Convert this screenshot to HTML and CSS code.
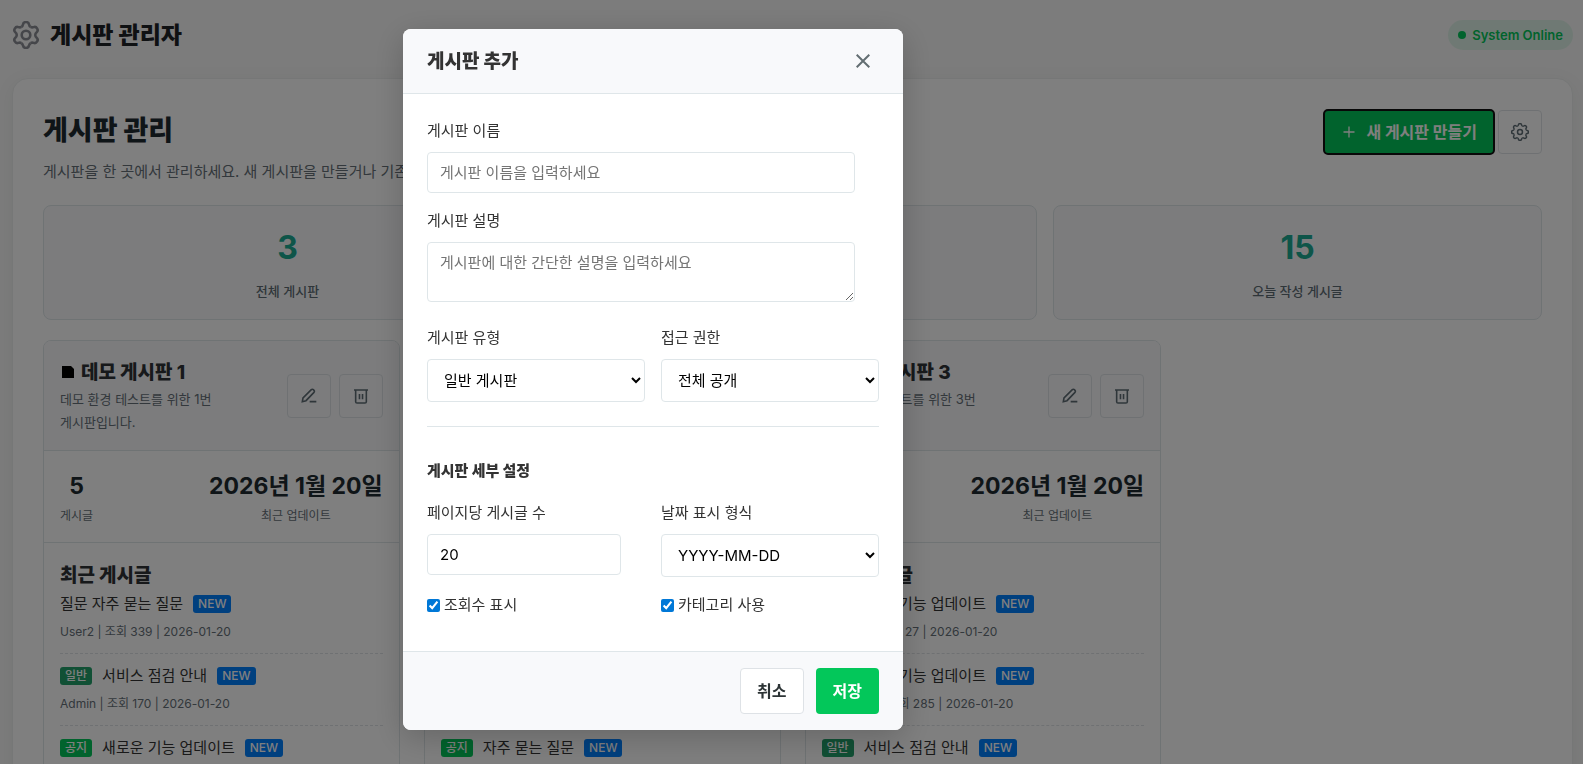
FILE: index.html
```html
<!DOCTYPE html>
<html lang="ko">
<head>
<meta charset="utf-8">
<meta name="viewport" content="width=device-width, initial-scale=1">
<title>게시판 관리자</title>
<link rel="stylesheet" href="styles.css">
</head>
<body>
<svg class="sprite" aria-hidden="true">
  <symbol id="edit" viewBox="0 0 24 24"><path d="M2 20.500l1-5.500L15.500 2.500a2.100 2.100 0 0 1 3 0l1 1a2.100 2.100 0 0 1 0 3L7.500 19zM13 20.500h10" /></symbol>
  <symbol id="trash" viewBox="0 0 24 24"><path d="M1.500 3h21M4 3v17.500a2 2 0 0 0 2 2h12a2 2 0 0 0 2-2V3M9.700 9v8M14.300 9v8" /></symbol>
  <path id="lobe6" d="M-4.300-7.450Q-3-8.200-2.800-9.800Q-2.400-12 0-12Q2.400-12 2.800-9.800Q3-8.200 4.300-7.450"/>
  <path id="lobe8" d="M-3.300-7.950Q-2.400-8.300-2.100-9.600Q-1.800-11.300 0-11.300Q1.800-11.300 2.100-9.600Q2.400-8.300 3.300-7.950"/>
</svg>
<header class="topbar">
  <div class="brand">
    <svg class="brand-icon" viewBox="-13 -13 26 26" aria-hidden="true"><use href="#lobe6"/><use href="#lobe6" transform="rotate(60)"/><use href="#lobe6" transform="rotate(120)"/><use href="#lobe6" transform="rotate(180)"/><use href="#lobe6" transform="rotate(240)"/><use href="#lobe6" transform="rotate(300)"/><circle r="4"/></svg>
    <h1>게시판 관리자</h1>
  </div>
  <span class="status"><span class="dot"></span>System Online</span>
</header>
<main class="panel">
  <div class="panel-head">
    <div>
      <h2>게시판 관리</h2>
      <p class="lead">게시판을 한 곳에서 관리하세요. 새 게시판을 만들거나 기존 게시판을 수정할 수 있습니다.</p>
    </div>
    <div class="panel-actions">
      <button class="btn btn-primary is-focused" type="button"><svg class="plus" viewBox="0 0 12 12" aria-hidden="true"><path d="M6 .5v11M.5 6h11"/></svg>새 게시판 만들기</button>
      <button class="icon-btn" type="button" aria-label="설정"><svg class="gear" viewBox="-12 -12 24 24" aria-hidden="true"><use href="#lobe8"/><use href="#lobe8" transform="rotate(45)"/><use href="#lobe8" transform="rotate(90)"/><use href="#lobe8" transform="rotate(135)"/><use href="#lobe8" transform="rotate(180)"/><use href="#lobe8" transform="rotate(225)"/><use href="#lobe8" transform="rotate(270)"/><use href="#lobe8" transform="rotate(315)"/><circle r="3.300"/></svg></button>
    </div>
  </div>
  <section class="stats">
    <div class="stat"><strong>3</strong><span>전체 게시판</span></div>
    <div class="stat"><strong>15</strong><span>전체 게시글</span></div>
    <div class="stat"><strong>15</strong><span>오늘 작성 게시글</span></div>
  </section>
  <section class="boards">
    <article class="board">
      <div class="board-head">
        <div>
          <h3><svg class="doc" viewBox="0 0 12 12" aria-hidden="true"><path d="M0 0h9l3 3v9H0z"/></svg>데모 게시판 1</h3>
          <p>데모 환경 테스트를 위한 1번 게시판입니다.</p>
        </div>
        <div class="board-actions">
          <button class="icon-btn" type="button" aria-label="수정"><svg viewBox="0 0 24 24"><use href="#edit"/></svg></button>
          <button class="icon-btn" type="button" aria-label="삭제"><svg viewBox="0 0 24 24"><use href="#trash"/></svg></button>
        </div>
      </div>
      <div class="board-stats">
        <div><strong>5</strong><span>게시글</span></div>
        <div><strong>2026년 1월 20일</strong><span>최근 업데이트</span></div>
      </div>
      <div class="recent">
        <h3>최근 게시글</h3>
        <ul>
          <li><div class="post">질문 자주 묻는 질문<span class="tag new">NEW</span></div><div class="meta">User2 | 조회 339 | 2026-01-20</div></li>
          <li><div class="post"><span class="tag general">일반</span>서비스 점검 안내<span class="tag new">NEW</span></div><div class="meta">Admin | 조회 170 | 2026-01-20</div></li>
          <li><div class="post"><span class="tag notice">공지</span>새로운 기능 업데이트<span class="tag new">NEW</span></div></li>
        </ul>
      </div>
    </article>
    <article class="board">
      <div class="board-head">
        <div>
          <h3><svg class="doc" viewBox="0 0 12 12" aria-hidden="true"><path d="M0 0h9l3 3v9H0z"/></svg>데모 게시판 2</h3>
          <p>데모 환경 테스트를 위한 2번 게시판입니다.</p>
        </div>
        <div class="board-actions">
          <button class="icon-btn" type="button" aria-label="수정"><svg viewBox="0 0 24 24"><use href="#edit"/></svg></button>
          <button class="icon-btn" type="button" aria-label="삭제"><svg viewBox="0 0 24 24"><use href="#trash"/></svg></button>
        </div>
      </div>
      <div class="board-stats">
        <div><strong>5</strong><span>게시글</span></div>
        <div><strong>2026년 1월 20일</strong><span>최근 업데이트</span></div>
      </div>
      <div class="recent">
        <h3>최근 게시글</h3>
        <ul>
          <li><div class="post">질문 서비스 점검<span class="tag new">NEW</span></div><div class="meta">Admin | 조회 170 | 2026-01-20</div></li>
          <li><div class="post"><span class="tag general">일반</span>서비스 점검<span class="tag new">NEW</span></div><div class="meta">Admin | 조회 170 | 2026-01-20</div></li>
          <li><div class="post"><span class="tag notice">공지</span>자주 묻는 질문<span class="tag new">NEW</span></div></li>
        </ul>
      </div>
    </article>
    <article class="board">
      <div class="board-head">
        <div>
          <h3><svg class="doc" viewBox="0 0 12 12" aria-hidden="true"><path d="M0 0h9l3 3v9H0z"/></svg>데모 게시판 3</h3>
          <p>데모 환경 테스트를 위한 3번 게시판입니다.</p>
        </div>
        <div class="board-actions">
          <button class="icon-btn" type="button" aria-label="수정"><svg viewBox="0 0 24 24"><use href="#edit"/></svg></button>
          <button class="icon-btn" type="button" aria-label="삭제"><svg viewBox="0 0 24 24"><use href="#trash"/></svg></button>
        </div>
      </div>
      <div class="board-stats">
        <div><strong>5</strong><span>게시글</span></div>
        <div><strong>2026년 1월 20일</strong><span>최근 업데이트</span></div>
      </div>
      <div class="recent">
        <h3>최근 게시글</h3>
        <ul>
          <li><div class="post">질문 새로운 기능 업데이트<span class="tag new">NEW</span></div><div class="meta">Member | 조회 27 | 2026-01-20</div></li>
          <li><div class="post">질문 새로운 기능 업데이트<span class="tag new">NEW</span></div><div class="meta">Manager1 | 조회 285 | 2026-01-20</div></li>
          <li><div class="post"><span class="tag general">일반</span>서비스 점검 안내<span class="tag new">NEW</span></div></li>
        </ul>
      </div>
    </article>
  </section>
</main>
<div class="overlay">
  <form class="modal" role="dialog" aria-labelledby="modal-title">
    <div class="modal-head">
      <h3 id="modal-title">게시판 추가</h3>
      <button class="close" type="button" aria-label="닫기"><svg viewBox="0 0 14 14" aria-hidden="true"><path d="M.7.7l12.600 12.600M13.300.7L.7 13.300"/></svg></button>
    </div>
    <div class="modal-body">
      <div class="field full"><label for="name">게시판 이름</label><input id="name" type="text" placeholder="게시판 이름을 입력하세요"></div>
      <div class="field full"><label for="desc">게시판 설명</label><textarea id="desc" placeholder="게시판에 대한 간단한 설명을 입력하세요"></textarea></div>
      <div class="row types">
        <div class="field"><label for="type">게시판 유형</label><select id="type"><option>일반 게시판</option></select></div>
        <div class="field"><label for="access">접근 권한</label><select id="access"><option>전체 공개</option></select></div>
      </div>
      <hr>
      <h4>게시판 세부 설정</h4>
      <div class="row">
        <div class="field"><label for="count">페이지당 게시글 수</label><input class="count" id="count" type="number" value="20"></div>
        <div class="field"><label for="date">날짜 표시 형식</label><select id="date"><option>YYYY-MM-DD</option></select></div>
        <label class="check"><input type="checkbox" checked>조회수 표시</label>
        <label class="check"><input type="checkbox" checked>카테고리 사용</label>
      </div>
    </div>
    <div class="modal-foot">
      <button class="btn btn-plain" type="button">취소</button>
      <button class="btn btn-primary" type="submit">저장</button>
    </div>
  </form>
</div>
</body>
</html>
```
FILE: styles.css
```css
* { box-sizing: border-box; }

html, body { height: 100%; }

body {
  margin: 0;
  padding: 0 10px 0 12px;
  overflow: hidden;
  background: #f8f8f8;
  color: #333;
  font-family: Inter, "Noto Sans CJK KR", sans-serif;
  font-size: 15px;
  line-height: 24px;
  word-break: keep-all;
}

h1, h2, h3, h4, p, ul { margin: 0; padding: 0; }
h1, h2, h3, h4 { font-weight: 800; }
ul { list-style: none; }
button, input, select, textarea { font: inherit; }
svg { display: block; fill: none; stroke: currentColor; }
.sprite { position: absolute; width: 0; height: 0; }

.topbar {
  display: flex;
  align-items: center;
  justify-content: space-between;
  height: 70px;
}
.brand { display: flex; align-items: center; gap: 10px; }
.brand-icon { width: 28px; height: 28px; stroke-width: 2.4; color: #8b8d94; }
.brand h1 { font-size: 23px; line-height: 32px; color: #1f2226; }
.status {
  display: flex;
  align-items: center;
  gap: 6px;
  height: 30px;
  padding: 0 10px;
  border-radius: 15px;
  background: #dff3e8;
  color: #03c75a;
  font-size: 13px;
  font-weight: 600;
}
.dot { width: 8px; height: 8px; border-radius: 50%; background: #03c75a; }

.panel {
  margin-top: 8px;
  padding: 30px;
  border: 1px solid #eceeee;
  border-radius: 16px;
  background: #fff;
  box-shadow: 0 4px 20px rgba(0, 60, 30, .06);
}
.panel-head { display: flex; align-items: flex-start; justify-content: space-between; }
.panel-head h2 { padding-top: 2px; font-size: 27px; line-height: 40px; color: #1e2a30; }
.lead { margin-top: 9px; color: #667078; }
.panel-actions { display: flex; gap: 4px; padding-top: 1px; }

.btn {
  display: flex;
  align-items: center;
  justify-content: center;
  padding: 10px 16px;
  border: 1px solid transparent;
  border-radius: 4px;
  font-size: 16px;
  font-weight: 700;
  line-height: 24px;
}
.btn-primary { background: #03c75a; color: #fff; }
.btn-plain { border-color: #dee2e6; background: #fff; color: #2d3436; }
.is-focused { height: 44px; outline: 2px solid #101010; outline-offset: -1px; }
.plus { width: 12px; height: 12px; margin: 0 11px 0 2px; stroke-width: 1.3; }
.icon-btn {
  display: grid;
  place-items: center;
  width: 44px;
  height: 44px;
  padding: 0;
  border: 1px solid #dfe3e6;
  border-radius: 4px;
  background: transparent;
  color: #5f6d75;
}
.icon-btn svg { width: 16px; height: 16px; stroke-width: 2.4; }
.icon-btn .gear { width: 18px; height: 18px; stroke-width: 2; }

.stats { display: grid; grid-template-columns: repeat(3, 1fr); gap: 16px; margin-top: 21px; }
.stat {
  display: flex;
  flex-direction: column;
  align-items: center;
  gap: 7px;
  padding: 16px 16px 17px;
  border: 1px solid #dfe6e9;
  border-radius: 8px;
  background: #f8f9fb;
}
.stat strong { font-size: 32px; line-height: 52px; color: #1caa92; }
.stat span { font-size: 13px; line-height: 21px; font-weight: 500; color: #5f6d75; }

.boards {
  display: grid;
  grid-template-columns: repeat(auto-fill, minmax(340px, 1fr));
  gap: 24px;
  margin-top: 20px;
}
.board { overflow: hidden; border: 1px solid #dfe6e9; border-radius: 8px; background: #fff; }
.board-head {
  display: flex;
  align-items: center;
  justify-content: space-between;
  gap: 50px;
  padding: 16px;
  border-bottom: 1px solid #dfe6e9;
  background: #f8f9fb;
}
.board h3 { display: flex; align-items: center; font-size: 19px; line-height: 31px; color: #2f3337; }
.board-head p { font-size: 13px; line-height: 23px; color: #667078; }
.doc { width: 12px; height: 12px; margin: 0 7px 2px 2px; fill: #000; stroke: none; }
.board-actions { display: flex; gap: 8px; }
.board-stats {
  display: flex;
  justify-content: space-between;
  padding: 16px;
  border-bottom: 1px solid #dfe6e9;
  text-align: center;
}
.board-stats strong { display: block; font-size: 23px; line-height: 38px; color: #1e2a30; }
.board-stats span { display: block; font-size: 12px; line-height: 21px; color: #667078; }
.recent { padding: 16px; }
.recent h3 { line-height: 33px; }
.post { display: flex; align-items: center; }
.meta { margin-top: 5px; font-size: 12px; line-height: 21px; color: #667078; }
.recent li { padding-bottom: 11px; border-bottom: 1px dashed #dfe3e6; }
.recent li + li { padding-top: 10px; }
.tag {
  margin-right: 10px;
  padding: 0 5px;
  border-radius: 3px;
  color: #fff;
  font-size: 12px;
  font-weight: 500;
  line-height: 18px;
}
.tag.new { margin: 0 0 0 10px; background: #0080ff; }
.tag.general { background: #22a06b; }
.tag.notice { background: #03c75a; }

.overlay {
  position: fixed;
  inset: 0;
  padding: 29px 0 0 403px;
  background: rgba(0, 0, 0, .5);
}
.modal {
  width: 500px;
  overflow: hidden;
  border-radius: 8px;
  background: #fff;
  box-shadow: 0 8px 32px rgba(0, 0, 0, .2);
}
.modal-head {
  display: flex;
  align-items: center;
  justify-content: space-between;
  padding: 16px 24px;
  border-bottom: 1px solid #dfe6e9;
  background: #f8f9fb;
}
.modal-head h3 { padding-top: 2px; font-size: 19px; line-height: 30px; }
.close {
  display: grid;
  place-items: center;
  width: 32px;
  height: 32px;
  padding: 0;
  border: 0;
  background: none;
  color: #636e72;
}
.close svg { width: 14px; height: 14px; stroke-width: 2; }
.modal-body { padding: 25px 24px 34px; }
.field { display: flex; flex-direction: column; gap: 9px; }
.full { width: 428px; margin-bottom: 16px; }
.field input, .field textarea, .field select {
  display: block;
  width: 100%;
  margin: 0;
  border: 1px solid #dfe6e9;
  border-radius: 4px;
  background: #fff;
  color: #000;
}
.field input { height: 41px; padding: 8px 12px; }
.field .count { width: 194px; }
.field textarea { height: 60px; padding: 8px 12px; resize: vertical; }
.field select { height: 43px; padding: 8px 12px; }
.row { display: grid; grid-template-columns: 1fr 1fr; gap: 16px; }
.types { margin-top: 24px; }
hr { height: 1px; margin: 24px 0 32px; border: 0; background: #dfe6e9; }
.modal-body h4 { margin-bottom: 18px; font-size: 15px; }
.check { display: flex; align-items: center; gap: 4px; }
.check input { width: 13px; height: 13px; margin: 0; accent-color: #0078d7; }
.modal-foot {
  display: flex;
  justify-content: flex-end;
  gap: 12px;
  padding: 16px 24px;
  border-top: 1px solid #dfe6e9;
  background: #f8f9fb;
}
```
